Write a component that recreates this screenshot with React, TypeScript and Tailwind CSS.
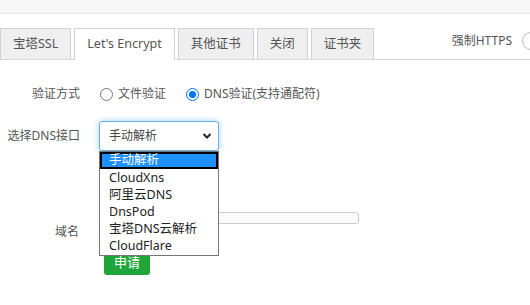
import React from "react";

const font = { fontFamily: '"Noto Sans", "Noto Sans CJK SC", sans-serif' };

function Radio({ checked }: { checked?: boolean }) {
  return checked ? (
    <span className="flex h-[13px] w-[13px] items-center justify-center rounded-full border-[1.5px] border-[#0075ff] bg-white">
      <span className="h-[7px] w-[7px] rounded-full bg-[#0075ff]" />
    </span>
  ) : (
    <span className="h-[13px] w-[13px] rounded-full border border-[#767676] bg-white" />
  );
}

function Tab({ label, active }: { label: string; active?: boolean }) {
  return active ? (
    <div className="mb-[-1px] flex h-[32px] items-center border border-b-0 border-[#cfcfdf] bg-white px-[12px] text-[12.5px] text-[#555]">
      {label}
    </div>
  ) : (
    <div className="flex h-[31px] items-center border border-b-0 border-[#cfcfdf] bg-[#efefef] px-[12px] text-[12.5px] text-[#555]">
      {label}
    </div>
  );
}

const options = ["手动解析", "CloudXns", "阿里云DNS", "DnsPod", "宝塔DNS云解析", "CloudFlare"];

export default function App() {
  return (
    <div className="relative h-[305px] w-[530px] overflow-hidden bg-white" style={font}>
      <div className="h-[14px] border-b border-[#e3e3e3] bg-[#f6f6f6]" />
      <div className="mt-[15px] flex h-[31px] items-end border-b border-[#d4d4e4]">
        <div className="flex items-end gap-[3px]">
          <Tab label="宝塔SSL" />
          <Tab label="Let's Encrypt" active />
          <Tab label="其他证书" />
          <Tab label="关闭" />
          <Tab label="证书夹" />
        </div>
        <div className="ml-auto flex h-[31px] items-center gap-[10px] self-start pb-[8px]">
          <span className="text-[12px] text-[#555]">强制HTTPS</span>
          <span className="mr-[-10px] h-[18px] w-[18px] rounded-full border border-[#bbb] bg-white" />
        </div>
      </div>

      <div className="flex flex-col text-[12px] text-[#555]">
        <div className="mt-[24px] flex h-[20px] items-center">
          <div className="w-[80px] text-right">验证方式</div>
          <div className="ml-[20px] flex items-center gap-[5px]">
            <Radio />
            <span>文件验证</span>
          </div>
          <div className="ml-[20px] flex items-center gap-[5px]">
            <Radio checked />
            <span>DNS验证(支持通配符)</span>
          </div>
        </div>

        <div className="mt-[17px] flex h-[30px] items-center">
          <div className="w-[80px] text-right">选择DNS接口</div>
          <div className="relative ml-[19px]">
            <div className="flex h-[30px] w-[120px] items-center justify-between rounded-[3px] border border-[#66afe9] bg-white pl-[9px] pr-[6px] text-[#444] shadow-[0_0_6px_rgba(102,175,233,0.6)]">
              <span>手动解析</span>
              <svg width="10" height="8" viewBox="0 0 10 8">
                <path d="M1.5 2 L5 5.5 L8.5 2" fill="none" stroke="#222" strokeWidth="2" />
              </svg>
            </div>
            <div className="absolute left-0 top-[30px] z-10 w-[120px] border border-[#767676] bg-white pb-[1px] text-[12.5px] text-[#222]">
              {options.map((o, i) =>
                i === 0 ? (
                  <div key={o} className="flex h-[17px] items-center border-2 border-black bg-[#1e90ff] pl-[7px] leading-none text-white">
                    {o}
                  </div>
                ) : (
                  <div key={o} className="flex h-[17px] items-center pl-[9px] pt-[2px] leading-none">
                    {o}
                  </div>
                )
              )}
            </div>
          </div>
        </div>

        <div className="ml-[99px] mt-[61px] h-[12px] w-[260px] rounded-[3px] border border-[#ccc] bg-[#fbfbfb]" />

        <div className="mt-[0px] flex h-[16px] items-center">
          <div className="w-[79px] text-right">域名</div>
        </div>

        <div className="ml-[104px] mt-[10px] flex h-[25px] w-[46px] items-center justify-center rounded-[3px] bg-[#20a53a] text-[13px] text-white">
          申请
        </div>
      </div>
    </div>
  );
}
